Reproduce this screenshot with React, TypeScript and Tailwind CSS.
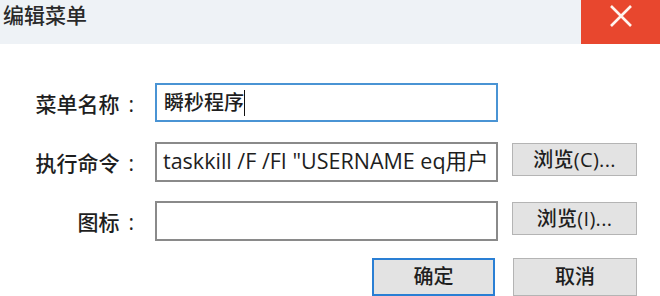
import { useState } from "react";

const FONT = '"Open Sans", "Noto Sans CJK SC", sans-serif';

function Row({
  label,
  children,
  action,
}: {
  label: string;
  children: React.ReactNode;
  action?: string;
}) {
  return (
    <div className="flex items-start h-[40px]">
      <div className="w-[155px] h-[40px] flex items-center justify-end pr-[21px] pt-[4px] text-[21px] font-medium text-[#1e1e1e]">
        {label}
        <span className="ml-[9px]">:</span>
      </div>
      {children}
      {action && (
        <button className="ml-[14px] mt-[1px] w-[125px] h-[33px] border border-[#b4b4b4] bg-[#e3e3e3] text-[20px] font-medium text-[#1e1e1e] flex items-center justify-center tracking-[0.3px]">
          {action}
        </button>
      )}
    </div>
  );
}

export default function App() {
  const [name] = useState("瞬秒程序");
  const [cmd] = useState('taskkill /F /FI "USERNAME eq用户');

  return (
    <div className="w-[660px] h-[296px] bg-white overflow-hidden" style={{ fontFamily: FONT }}>
      {/* Title bar */}
      <div className="h-[44px] bg-[#eef2f6] flex items-start justify-between">
        <div className="pl-[3px] text-[21px] leading-[30px] font-medium text-[#2a2a2a]">编辑菜单</div>
        <button className="w-[79px] h-[44px] bg-[#e8472e] flex justify-center pt-[5px]">
          <svg width="24" height="22" viewBox="0 0 24 22" fill="none">
            <path d="M2 1 L22 21 M22 1 L2 21" stroke="#fff5ef" strokeWidth="2.6" />
          </svg>
        </button>
      </div>

      {/* Form */}
      <div className="pt-[39px] flex flex-col gap-[19px]">
        <Row label="菜单名称">
          <div className="w-[343px] h-[39px] border-2 border-[#4a94d4] flex items-center pl-[7px] text-[20px] font-medium text-[#1e1e1e]">
            <span>{name}</span>
            <span className="w-px h-[26px] bg-[#111]" />
          </div>
        </Row>
        <Row label="执行命令" action="浏览(C)...">
          <div className="w-[343px] h-[40px] border-2 border-[#8a8a8a] flex items-center pl-[6px] pb-[2px] overflow-hidden whitespace-nowrap text-[21.5px] text-[#1e1e1e]">
            {cmd}
          </div>
        </Row>
        <Row label="图标" action="浏览(I)...">
          <div className="w-[343px] h-[40px] border-2 border-[#8a8a8a]" />
        </Row>
      </div>

      {/* Footer buttons */}
      <div className="flex pl-[372px] mt-[17px] gap-[18px]">
        <button className="w-[123px] h-[38px] border-2 border-[#2a7fd4] bg-[#e3e3e3] text-[20px] font-medium text-[#1e1e1e] flex items-center justify-center">
          确定
        </button>
        <button className="w-[124px] h-[38px] border border-[#b4b4b4] bg-[#e3e3e3] text-[20px] font-medium text-[#1e1e1e] flex items-center justify-center">
          取消
        </button>
      </div>
    </div>
  );
}
